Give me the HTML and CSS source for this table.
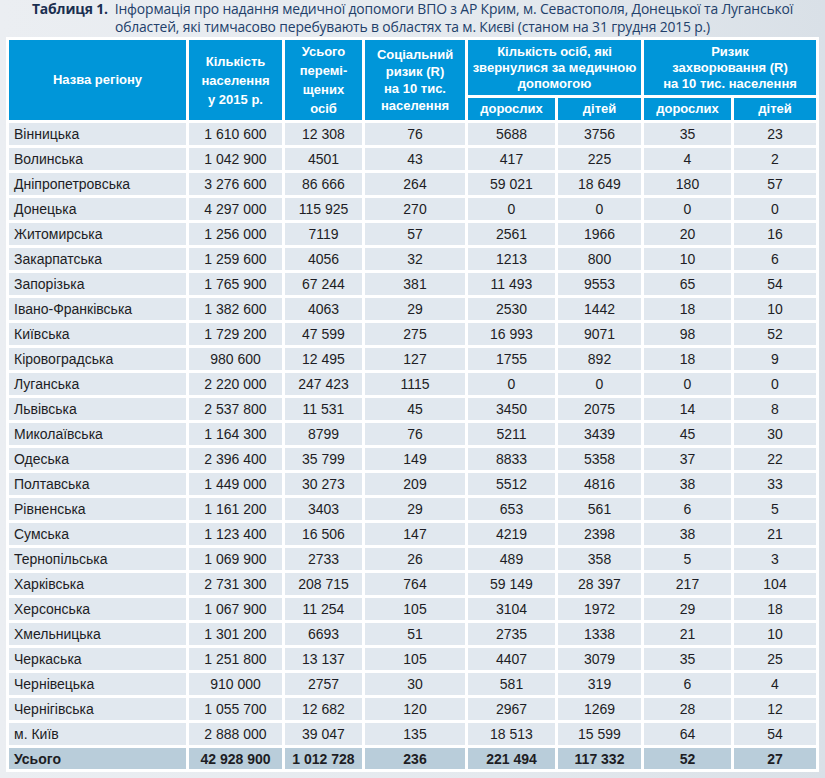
FILE: index.html
```html
<!DOCTYPE html>
<html lang="uk">
<head>
<meta charset="utf-8">
<link rel="stylesheet" href="styles.css">
</head>
<body>
<div class="page">
  <p class="caption"><span class="cap-num">Таблиця 1.</span>&nbsp; Інформація про надання медичної допомоги ВПО з АР Крим, м. Севастополя, Донецької та Луганської<br>областей, які тимчасово перебувають в областях та м. Києві (станом на 31 грудня 2015 р.)</p>
  <table class="data">
    <colgroup>
      <col class="c1"><col class="c2"><col class="c3"><col class="c4"><col class="c5"><col class="c6"><col class="c7"><col class="c8">
    </colgroup>
    <thead>
      <tr class="h1">
        <th rowspan="2">Назва регіону</th>
        <th rowspan="2" class="lh19">Кількість<br>населення<br>у 2015 р.</th>
        <th rowspan="2" class="lh19">Усього<br>перемі-<br>щених<br>осіб</th>
        <th rowspan="2" class="lh17">Соціальний<br>ризик (R)<br>на 10 тис.<br>населення</th>
        <th colspan="2" class="lh16">Кількість осіб, які<br>звернулися за медичною<br>допомогою</th>
        <th colspan="2" class="lh16">Ризик<br>захворювання (R)<br>на 10 тис. населення</th>
      </tr>
      <tr class="h2">
        <th>дорослих</th><th>дітей</th><th>дорослих</th><th>дітей</th>
      </tr>
    </thead>
    <tbody>
      <tr><td>Вінницька</td><td>1 610 600</td><td>12 308</td><td>76</td><td>5688</td><td>3756</td><td>35</td><td>23</td></tr>
      <tr><td>Волинська</td><td>1 042 900</td><td>4501</td><td>43</td><td>417</td><td>225</td><td>4</td><td>2</td></tr>
      <tr><td>Дніпропетровська</td><td>3 276 600</td><td>86 666</td><td>264</td><td>59 021</td><td>18 649</td><td>180</td><td>57</td></tr>
      <tr><td>Донецька</td><td>4 297 000</td><td>115 925</td><td>270</td><td>0</td><td>0</td><td>0</td><td>0</td></tr>
      <tr><td>Житомирська</td><td>1 256 000</td><td>7119</td><td>57</td><td>2561</td><td>1966</td><td>20</td><td>16</td></tr>
      <tr><td>Закарпатська</td><td>1 259 600</td><td>4056</td><td>32</td><td>1213</td><td>800</td><td>10</td><td>6</td></tr>
      <tr><td>Запорізька</td><td>1 765 900</td><td>67 244</td><td>381</td><td>11 493</td><td>9553</td><td>65</td><td>54</td></tr>
      <tr><td>Івано-Франківська</td><td>1 382 600</td><td>4063</td><td>29</td><td>2530</td><td>1442</td><td>18</td><td>10</td></tr>
      <tr><td>Київська</td><td>1 729 200</td><td>47 599</td><td>275</td><td>16 993</td><td>9071</td><td>98</td><td>52</td></tr>
      <tr><td>Кіровоградська</td><td>980 600</td><td>12 495</td><td>127</td><td>1755</td><td>892</td><td>18</td><td>9</td></tr>
      <tr><td>Луганська</td><td>2 220 000</td><td>247 423</td><td>1115</td><td>0</td><td>0</td><td>0</td><td>0</td></tr>
      <tr><td>Львівська</td><td>2 537 800</td><td>11 531</td><td>45</td><td>3450</td><td>2075</td><td>14</td><td>8</td></tr>
      <tr><td>Миколаївська</td><td>1 164 300</td><td>8799</td><td>76</td><td>5211</td><td>3439</td><td>45</td><td>30</td></tr>
      <tr><td>Одеська</td><td>2 396 400</td><td>35 799</td><td>149</td><td>8833</td><td>5358</td><td>37</td><td>22</td></tr>
      <tr><td>Полтавська</td><td>1 449 000</td><td>30 273</td><td>209</td><td>5512</td><td>4816</td><td>38</td><td>33</td></tr>
      <tr><td>Рівненська</td><td>1 161 200</td><td>3403</td><td>29</td><td>653</td><td>561</td><td>6</td><td>5</td></tr>
      <tr><td>Сумська</td><td>1 123 400</td><td>16 506</td><td>147</td><td>4219</td><td>2398</td><td>38</td><td>21</td></tr>
      <tr><td>Тернопільська</td><td>1 069 900</td><td>2733</td><td>26</td><td>489</td><td>358</td><td>5</td><td>3</td></tr>
      <tr><td>Харківська</td><td>2 731 300</td><td>208 715</td><td>764</td><td>59 149</td><td>28 397</td><td>217</td><td>104</td></tr>
      <tr><td>Херсонська</td><td>1 067 900</td><td>11 254</td><td>105</td><td>3104</td><td>1972</td><td>29</td><td>18</td></tr>
      <tr><td>Хмельницька</td><td>1 301 200</td><td>6693</td><td>51</td><td>2735</td><td>1338</td><td>21</td><td>10</td></tr>
      <tr><td>Черкаська</td><td>1 251 800</td><td>13 137</td><td>105</td><td>4407</td><td>3079</td><td>35</td><td>25</td></tr>
      <tr><td>Чернівецька</td><td>910 000</td><td>2757</td><td>30</td><td>581</td><td>319</td><td>6</td><td>4</td></tr>
      <tr><td>Чернігівська</td><td>1 055 700</td><td>12 682</td><td>120</td><td>2967</td><td>1269</td><td>28</td><td>12</td></tr>
      <tr><td>м. Київ</td><td>2 888 000</td><td>39 047</td><td>135</td><td>18 513</td><td>15 599</td><td>64</td><td>54</td></tr>
      <tr class="total"><td>Усього</td><td>42 928 900</td><td>1 012 728</td><td>236</td><td>221 494</td><td>117 332</td><td>52</td><td>27</td></tr>
    </tbody>
  </table>
</div>
</body>
</html>
```
FILE: styles.css
```css
html, body {
  margin: 0;
  padding: 0;
}
body {
  width: 825px;
  height: 778px;
  overflow: hidden;
  background: linear-gradient(to right, #ebeef2 0%, #e4e9ee 60%, #d9e0e7 100%);
  font-family: "Liberation Sans", Arial, sans-serif;
}
.page {
  padding: 0 0 0 6px;
}
.caption {
  margin: 0 0 0 -6px;
  width: 825px;
  height: 37px;
  padding-top: 0;
  box-sizing: border-box;
  text-align: center;
  font-family: "Open Sans", "Liberation Sans", sans-serif;
  font-size: 13.9px;
  line-height: 18px;
  color: #22406a;
  letter-spacing: -0.15px;
}
.cap-num {
  font-weight: 700;
  color: #1b2f50;
}
.data {
  table-layout: fixed;
  width: 813px;
  border-collapse: separate;
  border-spacing: 3px;
  background: #ffffff;
}
.c1 { width: 177px; }
.c2 { width: 93px; }
.c3 { width: 77px; }
.c4 { width: 100px; }
.c5 { width: 87px; }
.c6 { width: 83px; }
.c7 { width: 87px; }
.c8 { width: 82px; }
.data th {
  background: #0096d9;
  color: #ffffff;
  font-weight: 700;
  font-size: 13px;
  line-height: 16px;
  text-align: center;
  vertical-align: middle;
  padding: 0;
}
.data th.lh19 { line-height: 19px; }
.data th.lh17 { line-height: 17px; }
.data th.lh16 { line-height: 16px; }
.h1 th { height: 55px; }
.h2 th { height: 22px; }
.data td {
  background: #e1e8ef;
  color: #1d1d24;
  font-size: 14px;
  height: 22px;
  padding: 0;
  text-align: center;
  vertical-align: middle;
  white-space: nowrap;
}
.data td:first-child {
  text-align: left;
  padding-left: 5px;
}
.data tr.total td {
  background: #b9cdda;
  font-weight: 700;
  height: 21px;
}
```
